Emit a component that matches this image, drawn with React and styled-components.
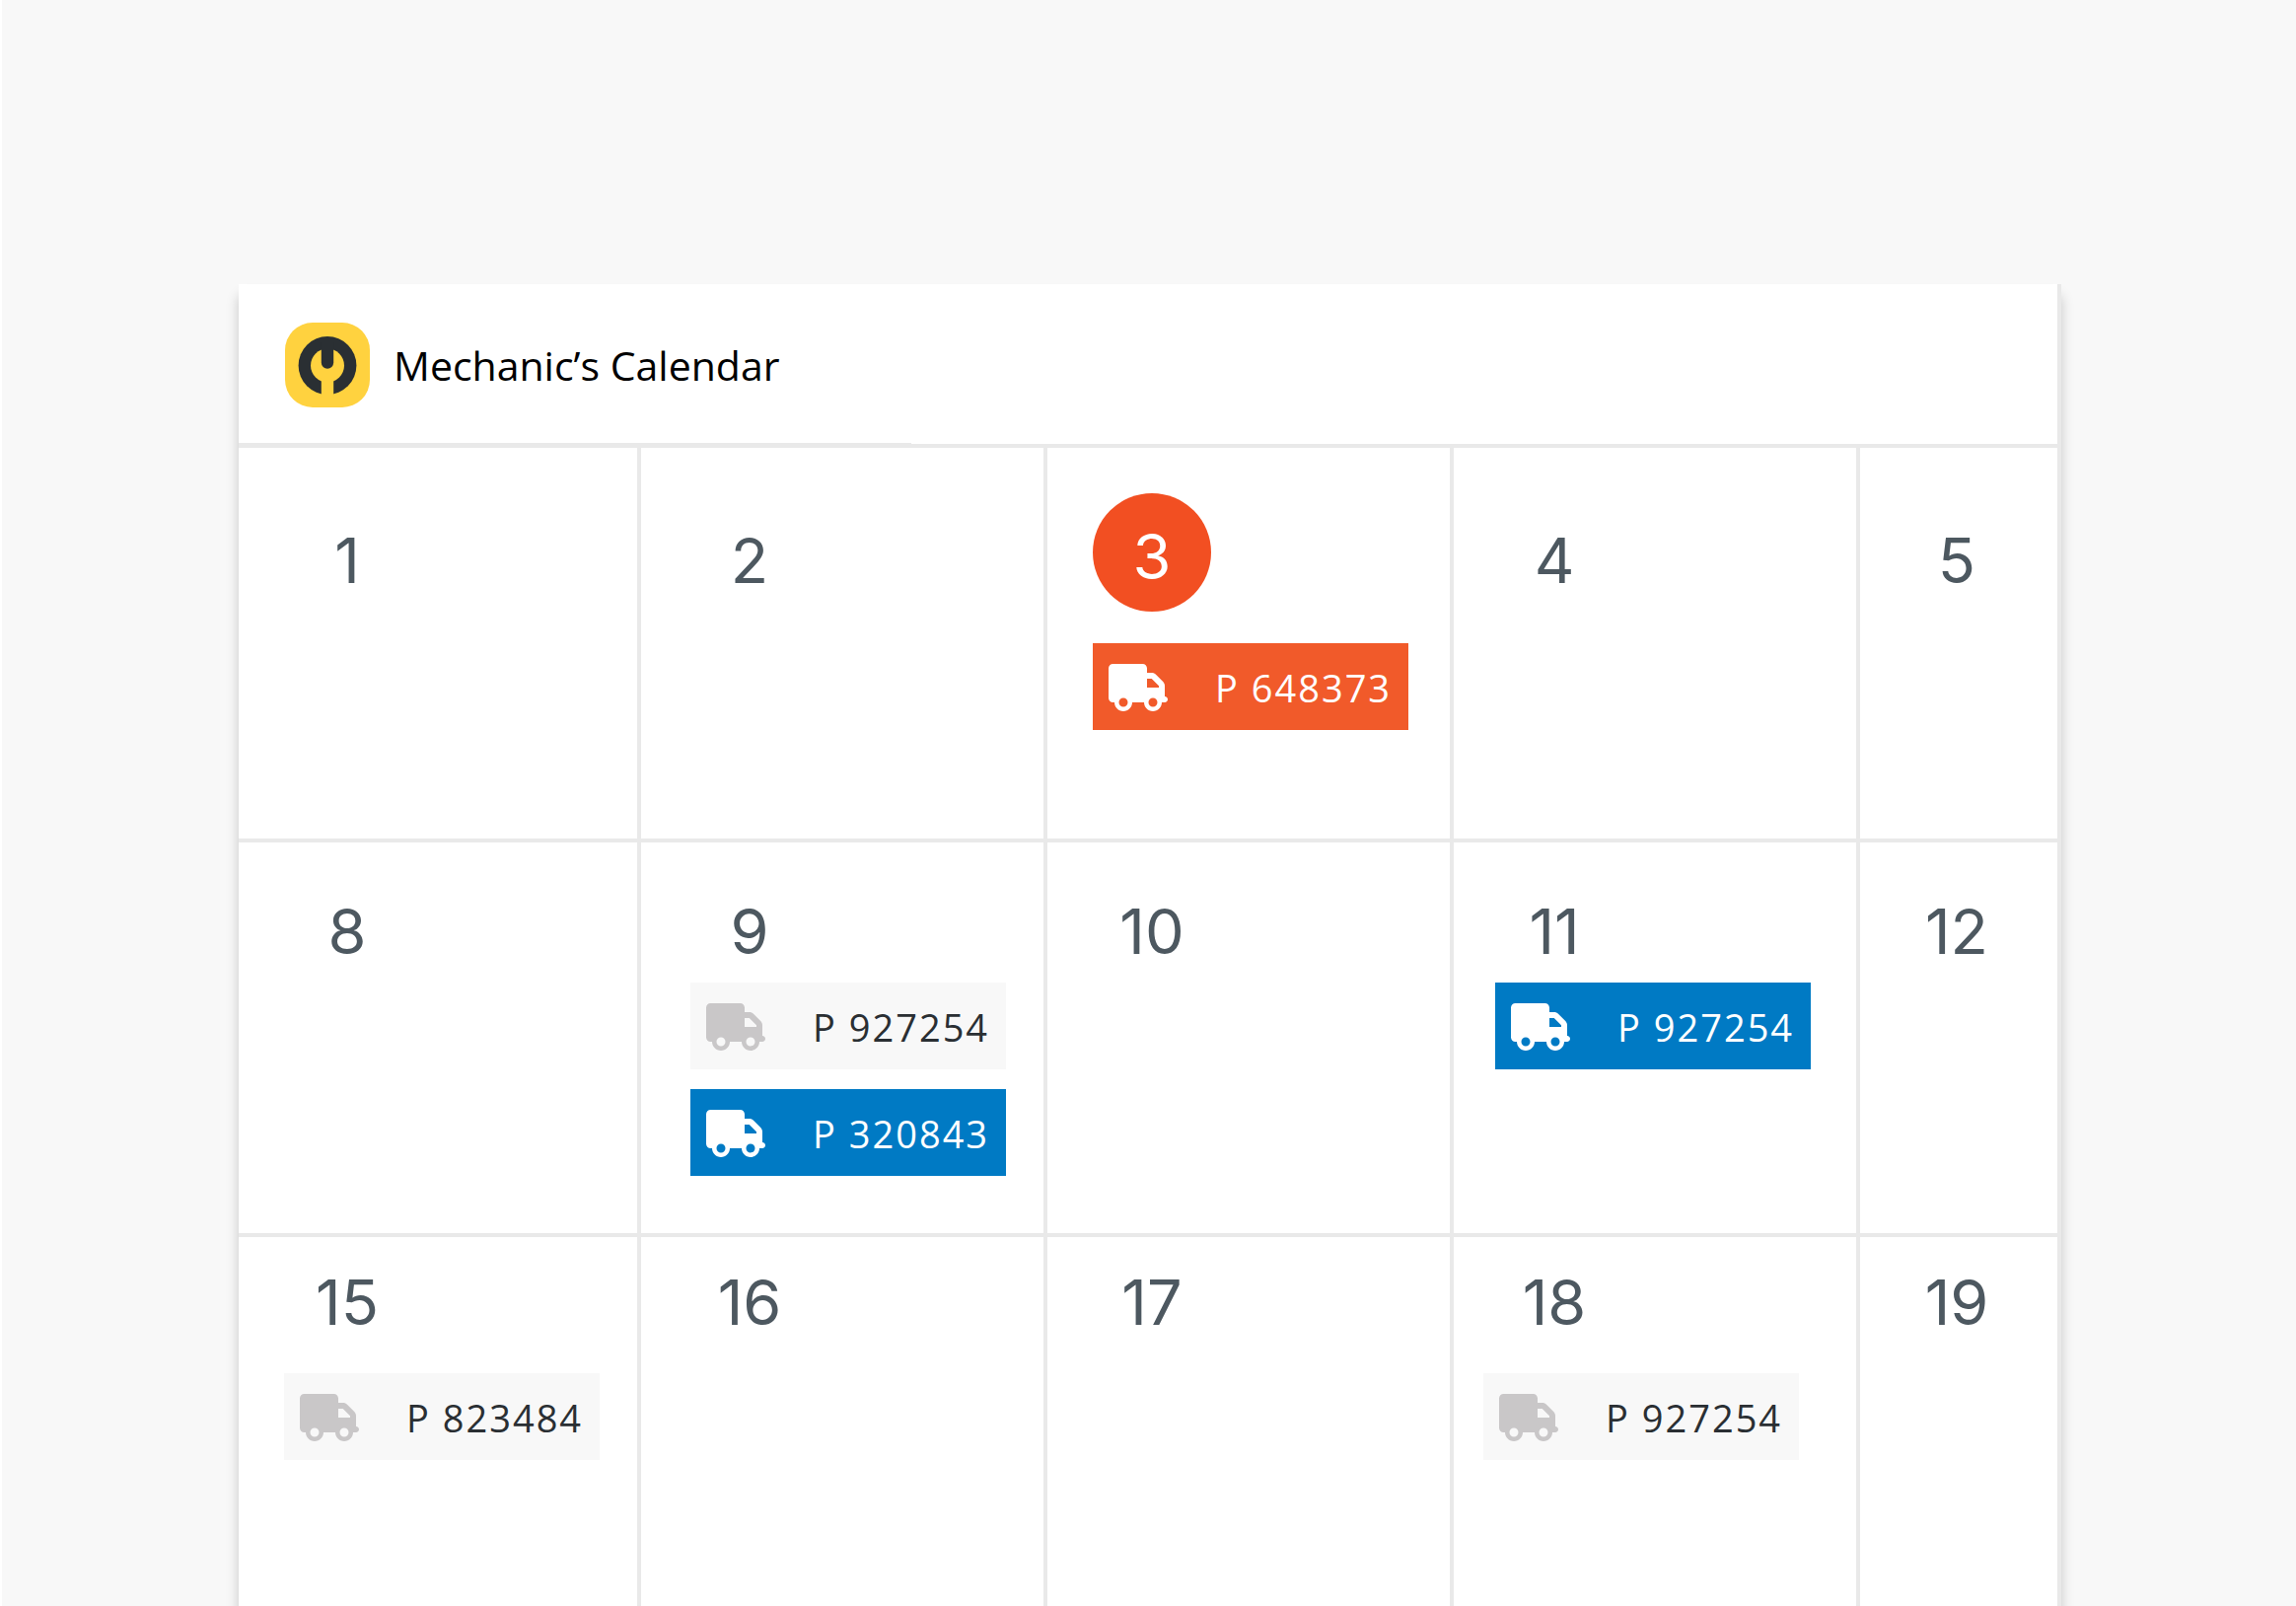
import React from "react";
import styled, { createGlobalStyle } from "styled-components";

const color = {
  page: "#f8f8f8",
  card: "#ffffff",
  line: "#e9e9e9",
  day: "#4d5860",
  ink: "#2a2f33",
  today: "#f24f22",
  yellow: "#ffd23f",
  mute: "#c9c7c8",
};

const tones = {
  urgent: { background: "#f15a2a", text: "#ffffff", icon: "#ffffff" },
  active: { background: "#007ac4", text: "#ffffff", icon: "#ffffff" },
  idle: { background: "#f8f8f8", text: color.ink, icon: color.mute },
};

const GlobalStyle = createGlobalStyle`
  *, *::before, *::after { box-sizing: border-box; }
  body { margin: 0; background: ${color.page}; }
`;

const Page = styled.main`
  height: 100vh;
  overflow: hidden;
  padding: 288px 238px 0 240px;
  border-left: 2px solid #ffffff;
  background: ${color.page};
  font-family: "Open Sans", "Noto Sans", sans-serif;
`;

const Card = styled.section`
  background: ${color.card};
  border-right: 4px solid ${color.line};
  box-shadow: 0 12px 12px rgba(0, 0, 0, 0.2);
`;

const Header = styled.header`
  display: flex;
  align-items: center;
  gap: 24px;
  height: 166px;
  padding: 2px 47px 0;
  border-bottom: 4px solid ${color.line};
  background: linear-gradient(${color.line}, ${color.line}) left bottom / 37% 1px no-repeat;
`;

const Logo = styled.svg`
  flex: none;
  width: 86px;
  height: 86px;
`;

const Title = styled.h1`
  margin: 0;
  font-size: 41px;
  font-weight: 400;
  line-height: 56px;
  color: #000000;
`;

const Month = styled.table`
  display: block;
`;

const Weeks = styled.tbody`
  display: block;
`;

const Week = styled.tr`
  display: grid;
  grid-template-columns: 408fr 412fr 412fr 412fr 200fr;
  min-height: 400px;
  border-bottom: 4px solid ${color.line};
`;

const Day = styled.td`
  display: flex;
  flex-direction: column;
  align-items: flex-start;
  gap: ${(p) => p.$gap}px;
  padding: ${(p) => p.$top}px 0 0;
  border-right: 4px solid ${color.line};

  &:last-child {
    border-right: 0;
  }
`;

const DayNumber = styled.time`
  width: 120px;
  margin-left: ${(p) => p.$inset}px;
  font-family: Inter, "Liberation Sans", sans-serif;
  font-size: 63px;
  line-height: 60px;
  text-align: center;
  color: ${color.day};
`;

const TodayNumber = styled(DayNumber)`
  height: 120px;
  padding-top: 34px;
  border-radius: 50%;
  background: ${color.today};
  color: #ffffff;
`;

const Jobs = styled.ul`
  display: flex;
  flex-direction: column;
  gap: 20px;
  margin: 0 0 0 ${(p) => p.$inset}px;
  padding: 0;
  list-style: none;
`;

const Job = styled.li`
  display: flex;
  align-items: center;
  gap: 48px;
  width: 320px;
  height: 88px;
  padding: 2px 0 0 16px;
  background: ${(p) => tones[p.$tone].background};
  color: ${(p) => tones[p.$tone].text};
  font-size: 38px;
  line-height: 52px;
  letter-spacing: 2px;
  white-space: nowrap;
`;

const Truck = styled.svg`
  flex: none;
  width: 60px;
  height: 48px;
  fill: ${(p) => tones[p.$tone].icon};
`;

function WrenchLogo() {
  return (
    <Logo viewBox="0 0 86 86" aria-hidden="true">
      <rect width="86" height="86" rx="28" fill={color.yellow} />
      <circle cx="43" cy="43.5" r="29.4" fill={color.ink} />
      <circle cx="43" cy="43.5" r="17" fill={color.yellow} />
      <path d="M36.8 20h12.4v20.6a6.2 6.2 0 0 1-12.4 0z" fill={color.ink} />
      <path d="M36.8 56h12.4v20H36.8z" fill={color.yellow} />
    </Logo>
  );
}

function TruckIcon({ tone }) {
  return (
    <Truck $tone={tone} viewBox="0 0 640 512" aria-hidden="true">
      <path d="M48 0C21.5 0 0 21.5 0 48V368c0 26.5 21.5 48 48 48H64c0 53 43 96 96 96s96-43 96-96H384c0 53 43 96 96 96s96-43 96-96h32c17.7 0 32-14.3 32-32s-14.3-32-32-32V288 256 237.3c0-17-6.7-33.3-18.7-45.3L512 114.7c-12-12-28.3-18.7-45.3-18.7H416V48c0-26.5-21.5-48-48-48H48zM416 160h50.7L544 237.3V256H416V160zM112 416a48 48 0 1 1 96 0 48 48 0 1 1 -96 0zm368-48a48 48 0 1 1 0 96 48 48 0 1 1 0-96z" />
    </Truck>
  );
}

const columnInsets = [50, 50, 46, 42, 38];

const weeks = [
  {
    top: 84,
    gap: 32,
    days: [
      { day: 1 },
      { day: 2 },
      { day: 3, today: true, jobs: [{ plate: "P 648373", tone: "urgent" }] },
      { day: 4 },
      { day: 5 },
    ],
  },
  {
    top: 60,
    gap: 22,
    days: [
      { day: 8 },
      {
        day: 9,
        jobs: [
          { plate: "P 927254", tone: "idle" },
          { plate: "P 320843", tone: "active" },
        ],
      },
      { day: 10 },
      { day: 11, jobs: [{ plate: "P 927254", tone: "active" }] },
      { day: 12 },
    ],
  },
  {
    top: 36,
    gap: 42,
    days: [
      { day: 15, jobsInset: 46, jobs: [{ plate: "P 823484", tone: "idle" }] },
      { day: 16 },
      { day: 17 },
      { day: 18, jobsInset: 30, jobs: [{ plate: "P 927254", tone: "idle" }] },
      { day: 19 },
    ],
  },
];

function DayCell({ entry, week, inset }) {
  const Num = entry.today ? TodayNumber : DayNumber;
  return (
    <Day $top={entry.today ? 46 : week.top} $gap={week.gap}>
      <Num $inset={inset} aria-current={entry.today ? "date" : undefined}>
        {entry.day}
      </Num>
      {entry.jobs && (
        <Jobs $inset={entry.jobsInset ?? inset}>
          {entry.jobs.map((job) => (
            <Job key={job.plate} $tone={job.tone}>
              <TruckIcon tone={job.tone} />
              {job.plate}
            </Job>
          ))}
        </Jobs>
      )}
    </Day>
  );
}

export default function App() {
  return (
    <>
      <GlobalStyle />
      <Page>
        <Card>
          <Header>
            <WrenchLogo />
            <Title id="calendar-title">Mechanic’s Calendar</Title>
          </Header>
          <Month aria-labelledby="calendar-title">
            <Weeks>
              {weeks.map((week) => (
                <Week key={week.days[0].day}>
                  {week.days.map((entry, i) => (
                    <DayCell key={entry.day} entry={entry} week={week} inset={columnInsets[i]} />
                  ))}
                </Week>
              ))}
            </Weeks>
          </Month>
        </Card>
      </Page>
    </>
  );
}
